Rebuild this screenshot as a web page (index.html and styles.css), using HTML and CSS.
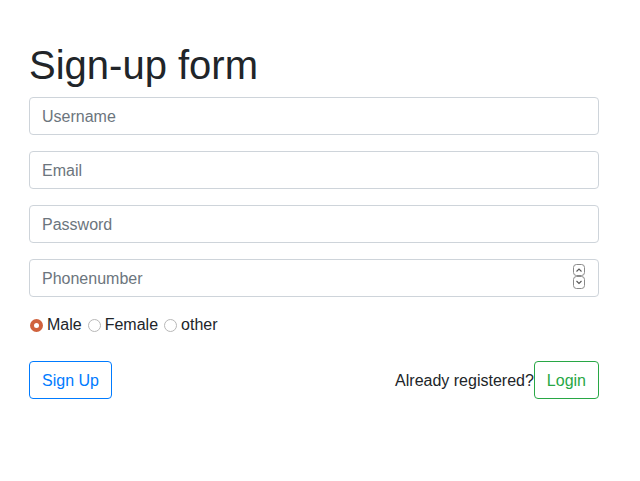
FILE: index.html
```html
<!DOCTYPE html>
<html>
<head>
<meta charset="utf-8">
<link rel="stylesheet" href="styles.css">
</head>
<body>
<div class="container">
  <h1 class="title">Sign-up form</h1>
  <form class="form">
    <input class="field" type="text" placeholder="Username">
    <input class="field" type="text" placeholder="Email">
    <input class="field" type="password" placeholder="Password">
    <div class="number-wrap">
      <input class="field" type="text" placeholder="Phonenumber">
      <span class="spinner">
        <svg width="14" height="36" viewBox="0 0 14 36">
          <rect x="1.5" y="5.5" width="11" height="11" rx="3" fill="#fff" stroke="#8a8a8a"/>
          <rect x="1.5" y="17.5" width="11" height="12" rx="3" fill="#fff" stroke="#8a8a8a"/>
          <path d="M4.5 12.5 L7 10 L9.5 12.5" fill="none" stroke="#555" stroke-width="1.1"/>
          <path d="M4.5 22 L7 24.5 L9.5 22" fill="none" stroke="#555" stroke-width="1.1"/>
        </svg>
      </span>
    </div>
    <div class="radios">
      <label class="radio"><input type="radio" name="g" checked>Male</label>
      <label class="radio"><input type="radio" name="g">Female</label>
      <label class="radio"><input type="radio" name="g">other</label>
    </div>
    <div class="actions">
      <button type="button" class="btn btn-blue">Sign Up</button>
      <div class="login">
        <span>Already registered?</span>
        <button type="button" class="btn btn-green">Login</button>
      </div>
    </div>
  </form>
</div>
</body>
</html>
```
FILE: styles.css
```css
html, body {
  margin: 0;
  padding: 0;
  background: #fff;
}
body {
  font-family: "Liberation Sans", Arial, sans-serif;
  font-size: 16px;
  color: #212529;
}
.container {
  padding: 41px 0 0 29px;
  width: 570px;
}
.title {
  margin: 0 0 8px 0;
  font-size: 40px;
  font-weight: 400;
  line-height: 48px;
}
.form {
  display: flex;
  flex-direction: column;
}
.field {
  box-sizing: border-box;
  width: 570px;
  height: 38px;
  padding: 7px 12px 5px;
  font-family: inherit;
  font-size: 16px;
  color: #495057;
  border: 1px solid #ced4da;
  border-radius: 4px;
  margin-bottom: 16px;
  outline: none;
}
.field::placeholder {
  color: #6c757d;
}
.number-wrap {
  position: relative;
}
.spinner {
  position: absolute;
  right: 13px;
  top: 0;
  display: block;
  height: 36px;
}
.spinner svg {
  display: block;
}
.radios {
  display: flex;
  align-items: center;
  height: 24px;
  margin-bottom: 24px;
}
.radio {
  display: flex;
  align-items: center;
  margin-right: 5px;
}
.radio input {
  appearance: none;
  -webkit-appearance: none;
  box-sizing: border-box;
  width: 13px;
  height: 13px;
  margin: 0 4px 0 1px;
  border: 1px solid #b8b8b8;
  border-radius: 50%;
  background: #fff;
}
.radio input:checked {
  border: 4px solid #d0623d;
  background: #fff;
}
.actions {
  display: flex;
  justify-content: space-between;
  align-items: center;
}
.login {
  display: flex;
  align-items: center;
}
.btn {
  box-sizing: border-box;
  height: 38px;
  padding: 7px 12px 5px;
  font-family: inherit;
  font-size: 16px;
  background: #fff;
  border-radius: 4px;
  line-height: 24px;
}
.btn-blue {
  color: #007bff;
  border: 1px solid #007bff;
}
.btn-green {
  color: #28a745;
  border: 1px solid #28a745;
}
.login span {
  padding-top: 2px;
}
```
